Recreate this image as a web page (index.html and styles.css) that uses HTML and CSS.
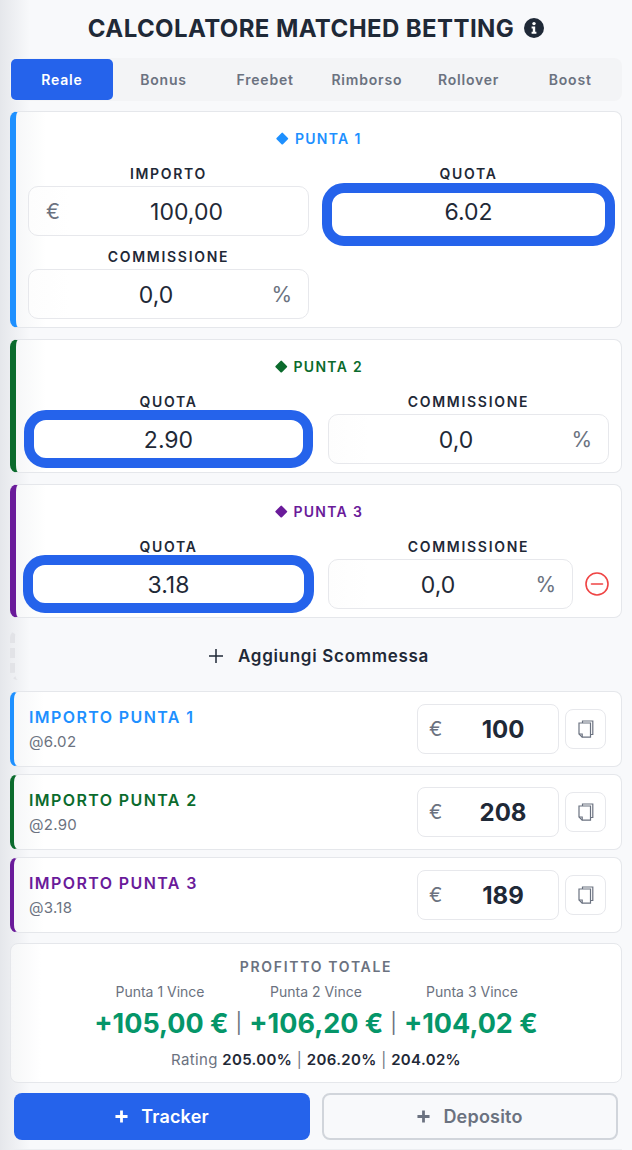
FILE: index.html
```html
<!DOCTYPE html>
<html lang="it">
<head>
<meta charset="utf-8">
<title>Calcolatore Matched Betting</title>
<link rel="stylesheet" href="styles.css">
</head>
<body>
<main class="page">
  <header class="head">
    <h1>CALCOLATORE MATCHED BETTING</h1>
    <svg class="info" viewBox="0 0 20 20" aria-hidden="true"><circle cx="10" cy="10" r="10" fill="#1f2937"/><circle cx="10" cy="5.6" r="1.7" fill="#fff"/><path d="M7.6 8.6h3.6v5.2h1.2v2H7.6v-2h1.2v-3.2H7.6z" fill="#fff"/></svg>
  </header>

  <nav class="tabs">
    <button class="tab active">Reale</button>
    <button class="tab">Bonus</button>
    <button class="tab">Freebet</button>
    <button class="tab">Rimborso</button>
    <button class="tab">Rollover</button>
    <button class="tab">Boost</button>
  </nav>

  <section class="card bet blue">
    <h2 class="bet-title"><span class="dia"></span>PUNTA 1</h2>
    <div class="grid">
      <div class="col">
        <label class="lab">IMPORTO</label>
        <div class="field has-prefix"><span class="prefix">€</span><span class="val">100,00</span></div>
      </div>
      <div class="col">
        <label class="lab">QUOTA</label>
        <div class="field focus f1"><span class="val">6.02</span></div>
      </div>
      <div class="col">
        <label class="lab">COMMISSIONE</label>
        <div class="field has-suffix"><span class="val">0,0</span><span class="suffix">%</span></div>
      </div>
    </div>
  </section>

  <section class="card bet green">
    <h2 class="bet-title"><span class="dia"></span>PUNTA 2</h2>
    <div class="grid">
      <div class="col">
        <label class="lab">QUOTA</label>
        <div class="field focus f2"><span class="val">2.90</span></div>
      </div>
      <div class="col">
        <label class="lab">COMMISSIONE</label>
        <div class="field has-suffix"><span class="val">0,0</span><span class="suffix">%</span></div>
      </div>
    </div>
  </section>

  <section class="card bet purple">
    <h2 class="bet-title"><span class="dia"></span>PUNTA 3</h2>
    <div class="grid">
      <div class="col">
        <label class="lab">QUOTA</label>
        <div class="field focus f3"><span class="val">3.18</span></div>
      </div>
      <div class="col">
        <label class="lab">COMMISSIONE</label>
        <div class="with-remove">
          <div class="field has-suffix"><span class="val">0,0</span><span class="suffix">%</span></div>
          <svg class="remove" viewBox="0 0 24 24" aria-hidden="true"><circle cx="12" cy="12" r="11" fill="none" stroke="#ef4444" stroke-width="1.6"/><path d="M6.5 12h11" stroke="#ef4444" stroke-width="1.6" stroke-linecap="round"/></svg>
        </div>
      </div>
    </div>
  </section>

  <button class="add">
    <svg class="add-icon" viewBox="0 0 16 16" aria-hidden="true"><path d="M8 1v14M1 8h14" stroke="#1f2937" stroke-width="1.5" fill="none"/></svg>
    Aggiungi Scommessa
  </button>

  <div class="rows">
    <div class="card row blue">
      <div class="row-info"><div class="row-title">IMPORTO PUNTA 1</div><div class="row-sub">@6.02</div></div>
      <div class="stake"><span class="stake-cur">€</span><span class="stake-val">100</span></div>
      <button class="copy"><svg viewBox="0 0 16 18" aria-hidden="true"><path d="M4.5 3V1h10.3v13.5h-2.3" class="ic"/><path d="M1 3h11.5v14.2H4.2L1 14z" class="ic"/><path d="M1 14h3.2v3.2" class="ic"/></svg></button>
    </div>
    <div class="card row green">
      <div class="row-info"><div class="row-title">IMPORTO PUNTA 2</div><div class="row-sub">@2.90</div></div>
      <div class="stake"><span class="stake-cur">€</span><span class="stake-val">208</span></div>
      <button class="copy"><svg viewBox="0 0 16 18" aria-hidden="true"><path d="M4.5 3V1h10.3v13.5h-2.3" class="ic"/><path d="M1 3h11.5v14.2H4.2L1 14z" class="ic"/><path d="M1 14h3.2v3.2" class="ic"/></svg></button>
    </div>
    <div class="card row purple">
      <div class="row-info"><div class="row-title">IMPORTO PUNTA 3</div><div class="row-sub">@3.18</div></div>
      <div class="stake"><span class="stake-cur">€</span><span class="stake-val">189</span></div>
      <button class="copy"><svg viewBox="0 0 16 18" aria-hidden="true"><path d="M4.5 3V1h10.3v13.5h-2.3" class="ic"/><path d="M1 3h11.5v14.2H4.2L1 14z" class="ic"/><path d="M1 14h3.2v3.2" class="ic"/></svg></button>
    </div>
  </div>

  <section class="card total">
    <div class="total-title">PROFITTO TOTALE</div>
    <div class="wins"><span>Punta 1 Vince</span><span>Punta 2 Vince</span><span>Punta 3 Vince</span></div>
    <div class="values"><span class="v">+105,00 €</span><span class="sep">|</span><span class="v">+106,20 €</span><span class="sep">|</span><span class="v">+104,02 €</span></div>
    <div class="rating">Rating <b>205.00%</b> <i>|</i> <b>206.20%</b> <i>|</i> <b>204.02%</b></div>
  </section>

  <div class="actions">
    <button class="act primary"><svg viewBox="0 0 14 14" aria-hidden="true"><path d="M7 0.5v13M0.5 7h13" stroke="#fff" stroke-width="3" fill="none"/></svg>Tracker</button>
    <button class="act ghost"><svg viewBox="0 0 14 14" aria-hidden="true"><path d="M7 0.5v13M0.5 7h13" stroke="#6b7280" stroke-width="3" fill="none"/></svg>Deposito</button>
  </div>
  <div class="foot-line"></div>
</main>
</body>
</html>
```
FILE: styles.css
```css
* { box-sizing: border-box; }
html, body { margin: 0; padding: 0; height: 1150px; overflow: hidden; }
body {
  font-family: Inter, "Liberation Sans", sans-serif;
  color: #1f2937;
  background: linear-gradient(90deg, #e5e7eb 0, #f8f9fb 30px);
}
button { font-family: inherit; cursor: pointer; padding: 0; }
.page { padding: 0 10px; display: flex; flex-direction: column; }

.head { height: 56px; margin-bottom: 2px; display: flex; align-items: center; justify-content: center; gap: 10px; }
h1 { margin: 0; font-size: 24px; font-weight: 700; letter-spacing: 0.4px; color: #1f2937; }
.info { width: 20px; height: 20px; }

.tabs { height: 43px; display: flex; padding: 1px; background: #f3f4f6; border-radius: 8px; margin-bottom: 10px; }
.tab { flex: 1 1 0; border: 0; background: transparent; color: #6b7280; font-size: 14px; font-weight: 600; letter-spacing: 0.8px; border-radius: 5px; }
.tab.active { background: #2563eb; color: #fff; }

.card {
  background: linear-gradient(90deg, #f6f7f8 0, #fff 30px);
  border: 1px solid #e5e7eb;
  border-radius: 8px;
}
.blue { --c: #1e90ff; }
.green { --c: #0b6b2d; }
.purple { --c: #6a1b9a; }

.bet { border-left: 6px solid var(--c); padding: 16px 12px 8px 12px; margin-bottom: 11px; }
.bet-title { margin: 0 0 16px; padding-left: 3px; height: 20px; display: flex; align-items: center; justify-content: center; gap: 8px; font-size: 14px; font-weight: 600; letter-spacing: 1.3px; color: var(--c); }
.dia { width: 8.5px; height: 8.5px; background: var(--c); transform: rotate(45deg); border-radius: 1px; }

.grid { display: grid; grid-template-columns: 1fr 1fr; column-gap: 19px; row-gap: 11px; }
.col { min-width: 0; display: flex; flex-direction: column; }
.lab { height: 18px; margin-bottom: 4px; display: flex; align-items: center; justify-content: center; font-size: 14px; font-weight: 600; letter-spacing: 1.7px; color: #1f2937; }

.field {
  position: relative;
  height: 50px;
  padding-top: 1px;
  display: flex; align-items: center; justify-content: center;
  background: linear-gradient(90deg, #fdfdfd 0, #fff 40px);
  border: 1.5px solid #e7e8ec;
  border-radius: 10px;
  font-size: 23px; color: #1f2937;
}
.has-prefix { padding-left: 36px; }
.has-suffix { padding-right: 25px; }
.prefix, .suffix { position: absolute; top: 50%; transform: translateY(-50%); font-size: 21px; color: #6b7280; }
.prefix { left: 17px; }
.suffix { right: 16px; }
.focus { background: #fff; border: 10px solid #2563eb; border-radius: 22px; }
.f1 { height: 63px; margin: -3px -6px -10px; padding-top: 0; padding-bottom: 6px; }
.f2 { height: 58px; margin: -4px -4px -4px; }
.f3 { height: 58px; margin: -4px -5px -4px; }

.with-remove { display: flex; align-items: center; }
.with-remove .field { flex: 1; }
.remove { width: 24px; height: 24px; margin-left: 12px; }

.add {
  height: 50px; margin: 1px 0 11px; padding-top: 1px;
  display: flex; align-items: center; justify-content: center; gap: 14px;
  background: transparent;
  border: 0; border-left: 5px dashed #e2e3e7; border-radius: 8px;
  font-size: 17px; font-weight: 600; letter-spacing: 0.7px; color: #1f2937;
}
.add-icon { width: 16px; height: 16px; }

.rows { display: flex; flex-direction: column; gap: 7px; margin-bottom: 10px; }
.row { height: 76px; border-left: 4px solid var(--c); padding: 0 15px; display: flex; align-items: center; }
.row-info { flex: 1; display: flex; flex-direction: column; gap: 5px; padding-top: 1px; }
.row-title { font-size: 16px; font-weight: 600; letter-spacing: 1.4px; line-height: 20px; color: var(--c); }
.row-sub { font-size: 15px; line-height: 20px; color: #6b7280; letter-spacing: 0.3px; }
.stake { position: relative; width: 142px; height: 50px; display: flex; align-items: center; justify-content: center; padding-left: 30px; background: #fff; border: 1.5px solid #e7e8ec; border-radius: 8px; }
.stake-cur { position: absolute; left: 11px; top: 50%; transform: translateY(-50%); font-size: 20px; color: #6b7280; }
.stake-val { font-size: 24px; font-weight: 700; color: #1f2937; }
.copy { width: 41px; height: 40px; margin-left: 6px; background: #fff; border: 1.5px solid #e7e8ec; border-radius: 8px; display: flex; align-items: center; justify-content: center; }
.copy svg { width: 16px; height: 18px; }
.ic { fill: none; stroke: #6b7280; stroke-width: 1.2; }

.total { height: 140px; margin-bottom: 10px; padding-top: 13px; display: flex; flex-direction: column; align-items: center; }
.total-title { height: 20px; line-height: 20px; font-size: 14px; font-weight: 600; letter-spacing: 1.7px; color: #6b7280; }
.wins { margin-top: 5px; height: 20px; display: grid; grid-template-columns: repeat(3, 156px); text-align: center; font-size: 14px; line-height: 20px; color: #6b7280; }
.values { margin-top: 3px; height: 36px; display: flex; align-items: center; gap: 7px; font-size: 27px; font-weight: 700; color: #059669; }
.sep { font-size: 20px; font-weight: 400; color: #6b7280; }
.rating { margin-top: 9px; font-size: 15px; line-height: 20px; letter-spacing: 0.35px; color: #6b7280; }
.rating b { font-weight: 600; color: #1f2937; }
.rating i { font-style: normal; }

.actions { display: grid; grid-template-columns: 1fr 1fr; gap: 12px; padding: 0 4px; }
.act { height: 47px; border-radius: 8px; font-size: 18px; font-weight: 600; letter-spacing: 0.2px; display: flex; align-items: center; justify-content: center; gap: 13px; }
.act svg { width: 13px; height: 13px; }
.primary { background: #2563eb; border: 0; color: #fff; }
.ghost { background: #f8f9fb; border: 2px solid #d1d5db; color: #6b7280; }
.foot-line { height: 1px; margin-top: 9px; background: #eceef1; }
```
